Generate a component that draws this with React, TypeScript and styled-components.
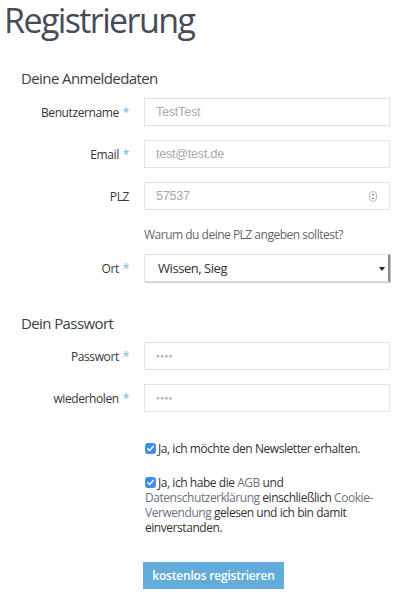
import React from 'react'
import styled, { createGlobalStyle } from 'styled-components'

const GlobalStyle = createGlobalStyle`
  html, body {
    margin: 0;
    padding: 0;
    background: #fff;
  }
  body {
    font-family: "Open Sans", "Noto Sans", sans-serif;
    color: #333;
  }
`

const Page = styled.div`
  width: 410px;
  padding: 0 20px 0 0;
  box-sizing: border-box;
`

const Title = styled.h1`
  margin: -3px 0 0 4px;
  font-size: 34px;
  line-height: 46px;
  font-weight: 400;
  color: #454c58;
  letter-spacing: -1.6px;
`

const SectionTitle = styled.h2<{ $top: number }>`
  margin: ${(p) => p.$top}px 0 0 21px;
  font-size: 15px;
  line-height: 20px;
  font-weight: 400;
  letter-spacing: -0.6px;
  color: #3a3f47;
`

const Fields = styled.div<{ $top: number }>`
  display: flex;
  flex-direction: column;
  gap: 14px;
  margin-top: ${(p) => p.$top}px;
`

const Row = styled.div`
  display: grid;
  grid-template-columns: 129px 1fr;
  column-gap: 15px;
  align-items: center;
`

const Label = styled.label`
  text-align: right;
  font-size: 12px;
  letter-spacing: -0.4px;
  color: #363636;
`

const Star = styled.span`
  color: #6fb3de;
  margin-left: 4px;
`

const InputBox = styled.div`
  position: relative;
  height: 28px;
  border: 1px solid #e2e2e2;
  box-sizing: border-box;
  display: flex;
  align-items: center;
  padding: 0 11px;
  background: #fff;
`

const InputText = styled.span`
  font-family: "Liberation Sans", Arial, sans-serif;
  font-size: 12.5px;
  letter-spacing: -0.2px;
  color: #a8a8a8;
`

const Dots = styled.span`
  font-family: "Liberation Sans", Arial, sans-serif;
  font-size: 6px;
  letter-spacing: 0.6px;
  color: #aaa;
`

const Spinner = styled.svg`
  position: absolute;
  right: 12px;
  top: 8px;
`

const SelectBox = styled(InputBox)`
  border-right: 2px solid #8a8a8a;
  box-shadow: 1px 1px 0 #c8c8c8;
  padding-left: 13px;
`

const SelectText = styled.span`
  font-size: 13px;
  letter-spacing: -0.45px;
  color: #333;
`

const Caret = styled.span`
  position: absolute;
  right: 3px;
  top: 12px;
  width: 0;
  height: 0;
  border-left: 3px solid transparent;
  border-right: 3px solid transparent;
  border-top: 4px solid #222;
`

const Hint = styled.div`
  margin: 17px 0 11px 144px;
  font-size: 12px;
  letter-spacing: -0.5px;
  color: #5f6772;
  line-height: 16px;
`

const Checks = styled.div`
  margin: 29px 0 0 145px;
  padding-right: 12px;
  display: flex;
  flex-direction: column;
  gap: 19px;
`

const CheckLine = styled.div`
  font-size: 12px;
  letter-spacing: -0.45px;
  line-height: 15px;
  color: #333;
`

const Box = styled.span`
  display: inline-block;
  vertical-align: -1px;
  width: 11px;
  height: 11px;
  margin-right: 2px;
  border-radius: 3px;
  background: #3e8ef0;
  position: relative;
`

const Link = styled.span`
  color: #6a7382;
`

const Button = styled.button`
  display: block;
  margin: 27px 0 0 143px;
  height: 27px;
  width: 141px;
  border: none;
  background: #62acdc;
  color: #fff;
  font-family: "Open Sans", sans-serif;
  font-weight: 600;
  font-size: 12px;
  letter-spacing: -0.2px;
  padding: 0;
`

const Check = () => (
  <Box>
    <svg width="11" height="11" viewBox="0 0 11 11" style={{ position: 'absolute', left: 0, top: 0 }}>
      <path d="M2.8 5.7 L4.6 7.5 L8.2 3.4" stroke="#fff" strokeWidth="1.5" fill="none" strokeLinecap="round" strokeLinejoin="round" />
    </svg>
  </Box>
)

const Field = ({ label, star, children }: { label: string; star?: boolean; children: React.ReactNode }) => (
  <Row>
    <Label>
      {label}
      {star && <Star>*</Star>}
    </Label>
    {children}
  </Row>
)

export default function App() {
  return (
    <Page>
      <GlobalStyle />
      <Title>Registrierung</Title>
      <SectionTitle $top={25}>Deine Anmeldedaten</SectionTitle>
      <Fields $top={10}>
        <Field label="Benutzername" star>
          <InputBox>
            <InputText>TestTest</InputText>
          </InputBox>
        </Field>
        <Field label="Email" star>
          <InputBox>
            <InputText>test@test.de</InputText>
          </InputBox>
        </Field>
        <Field label="PLZ">
          <InputBox>
            <InputText>57537</InputText>
            <Spinner width="8" height="11" viewBox="0 0 8 11">
              <rect x="0.5" y="0.5" width="7" height="10" rx="3.5" fill="#fff" stroke="#b8b8b8" />
              <path d="M2.5 4.2 L4 2.6 L5.5 4.2 Z M2.5 6.8 L4 8.4 L5.5 6.8 Z" fill="#777" />
            </Spinner>
          </InputBox>
        </Field>
      </Fields>
      <Hint>Warum du deine PLZ angeben solltest?</Hint>
      <Field label="Ort" star>
        <SelectBox>
          <SelectText>Wissen, Sieg</SelectText>
          <Caret />
        </SelectBox>
      </Field>
      <SectionTitle $top={31}>Dein Passwort</SectionTitle>
      <Fields $top={9}>
        <Field label="Passwort" star>
          <InputBox>
            <Dots>●●●●</Dots>
          </InputBox>
        </Field>
        <Field label="wiederholen" star>
          <InputBox>
            <Dots>●●●●</Dots>
          </InputBox>
        </Field>
      </Fields>
      <Checks>
        <CheckLine>
          <Check />
          Ja, ich möchte den Newsletter erhalten.
        </CheckLine>
        <CheckLine>
          <Check />
          Ja, ich habe die <Link>AGB</Link> und <Link>Datenschutzerklärung</Link> einschließlich{' '}
          <Link>Cookie-Verwendung</Link> gelesen und ich bin damit einverstanden.
        </CheckLine>
      </Checks>
      <Button>kostenlos registrieren</Button>
    </Page>
  )
}
